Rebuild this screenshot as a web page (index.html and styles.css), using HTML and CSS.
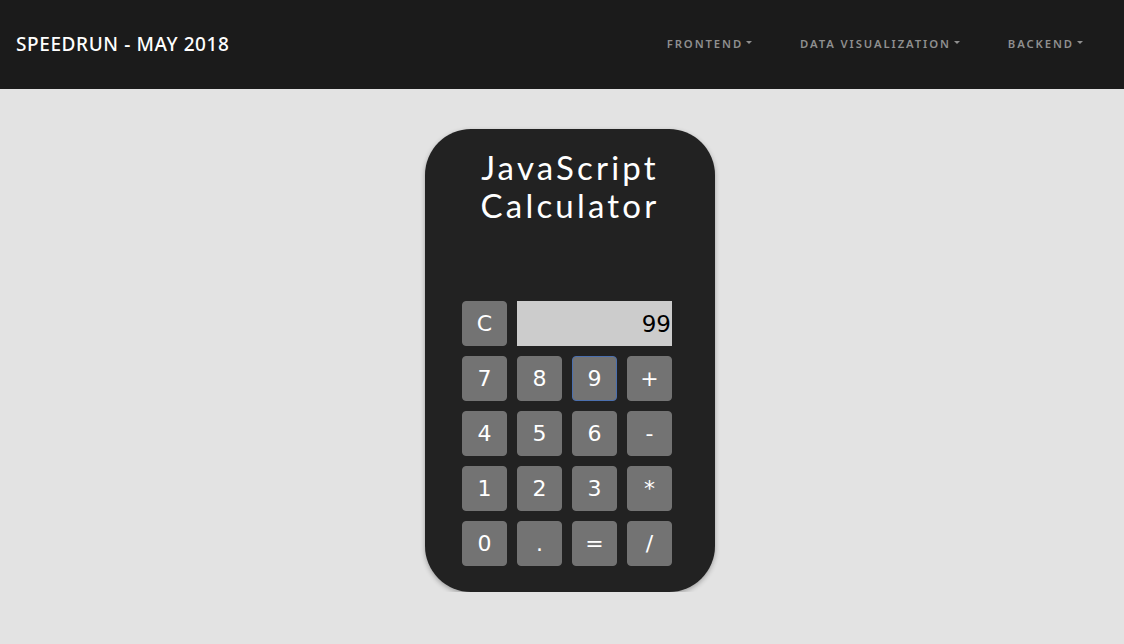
FILE: index.html
```html
<!DOCTYPE html>
<html>
<head>
<meta charset="utf-8">
<link rel="stylesheet" href="styles.css">
</head>
<body>
<nav class="navbar">
  <div class="brand">SPEEDRUN - MAY 2018</div>
  <ul class="nav-links">
    <li class="nav-item">FRONTEND<span class="caret"></span></li>
    <li class="nav-item">DATA VISUALIZATION<span class="caret"></span></li>
    <li class="nav-item">BACKEND<span class="caret"></span></li>
  </ul>
</nav>
<main class="page">
  <div class="calculator">
    <h1 class="title">JavaScript<br>Calculator</h1>
    <div class="keys">
      <button class="key">C</button>
      <div class="display">99</div>
      <button class="key">7</button>
      <button class="key">8</button>
      <button class="key focused">9</button>
      <button class="key">+</button>
      <button class="key">4</button>
      <button class="key">5</button>
      <button class="key">6</button>
      <button class="key">-</button>
      <button class="key">1</button>
      <button class="key">2</button>
      <button class="key">3</button>
      <button class="key">*</button>
      <button class="key">0</button>
      <button class="key">.</button>
      <button class="key">=</button>
      <button class="key">/</button>
    </div>
  </div>
</main>
</body>
</html>
```

FILE: styles.css
```css
* { box-sizing: border-box; }
html, body {
  margin: 0;
  padding: 0;
  background: #e3e3e3;
  font-family: "Lato", "Noto Sans", sans-serif;
}
.navbar {
  height: 89px;
  background: #1b1b1b;
  display: flex;
  align-items: center;
  justify-content: space-between;
  padding: 0 16px;
}
.brand {
  color: #ffffff;
  font-family: "Noto Sans", sans-serif;
  font-size: 19px;
  letter-spacing: 0.6px;
  font-weight: 500;
  margin-top: -2px;
}
.nav-links {
  list-style: none;
  margin: 0;
  padding: 0;
  display: flex;
  margin-top: -2px;
}
.nav-item {
  color: #8f8f8f;
  font-family: "Noto Sans", sans-serif;
  font-size: 11.3px;
  letter-spacing: 1.9px;
  font-weight: 600;
  padding: 0 24px;
  display: flex;
  align-items: center;
}
.nav-item:last-child { padding-right: 25px; }
.caret {
  display: inline-block;
  width: 0;
  height: 0;
  margin-left: 3px;
  border-left: 3px solid transparent;
  border-right: 3px solid transparent;
  border-top: 3px solid #8f8f8f;
  margin-top: -2px;
}
.page {
  display: flex;
  justify-content: center;
  padding-top: 40px;
  padding-left: 16px;
}
.calculator {
  width: 290px;
  height: 463px;
  background: #222222;
  border-radius: 46px;
  box-shadow: 0 2px 5px rgba(0,0,0,0.3);
  padding: 19px 0 0 37px;
}
.title {
  margin: 0;
  width: 216px;
  text-align: center;
  color: #ffffff;
  font-family: "Lato", sans-serif;
  font-weight: 400;
  font-size: 33px;
  line-height: 38px;
  letter-spacing: 3.2px;
  height: 153px;
}
.keys {
  display: grid;
  grid-template-columns: repeat(4, 45px);
  grid-auto-rows: 45px;
  gap: 10px;
  width: 210px;
}
.key {
  border: 1px solid #737373;
  border-radius: 4px;
  background: #737373;
  color: #ffffff;
  font-family: "DejaVu Sans", sans-serif;
  font-size: 22px;
  padding: 0;
  display: flex;
  align-items: center;
  justify-content: center;
}
.key.focused { border-color: #4b6fae; }
.display {
  grid-column: span 3;
  background: #cccccc;
  color: #000000;
  font-family: "DejaVu Sans", sans-serif;
  font-size: 23px;
  display: flex;
  align-items: center;
  justify-content: flex-end;
  padding-right: 1px;
}
```
